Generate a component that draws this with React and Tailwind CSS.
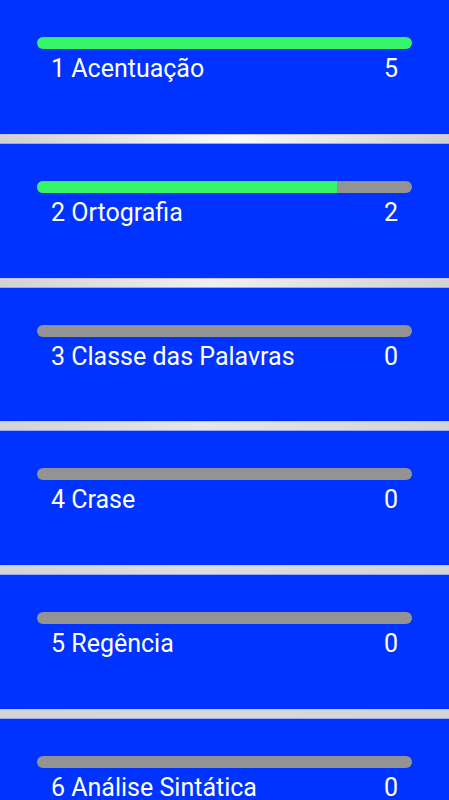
import React from 'react';

const topics = [
  { label: '1 Acentuação', score: 5, fill: 100 },
  { label: '2 Ortografia', score: 2, fill: 80 },
  { label: '3 Classe das Palavras', score: 0, fill: 0 },
  { label: '4 Crase', score: 0, fill: 0 },
  { label: '5 Regência', score: 0, fill: 0 },
  { label: '6 Análise Sintática', score: 0, fill: 0 },
];

// each divider gets a little dimmer further down the list
const dividers = [
  'bg-[linear-gradient(to_right,#d0d0d0,#fafafa_52%,#d0d0d0)]',
  'bg-[linear-gradient(to_right,#d2d2d2,#f0f0f0_47%,#d2d2d2)]',
  'bg-[linear-gradient(to_right,#d3d3d3,#e6e6e6_45%,#d3d3d3)]',
  'bg-[linear-gradient(to_right,#d4d4d4,#dedede_44%,#d4d4d4)]',
  'bg-[linear-gradient(to_right,#d4d4d4,#d9d9d9_45%,#d4d4d4)]',
];

function TopicCard({ topic }) {
  return (
    <div className="h-[133.8px] bg-[#0033ff] px-[37px] pt-[37px]">
      <div className="h-[12px] w-full overflow-hidden rounded-full bg-[#939393]">
        <div className="h-full bg-[#35f46a]" style={{ width: `${topic.fill}%` }} />
      </div>
      <div className="mt-[5px] flex items-center justify-between px-[14px] text-[25px] leading-[29px] text-white">
        <span>{topic.label}</span>
        <span>{topic.score}</span>
      </div>
    </div>
  );
}

export default function App() {
  return (
    <div
      className="h-[800px] overflow-hidden bg-[#0033ff] shadow-[inset_0_1px_2px_rgba(0,0,30,0.45)]"
      style={{ fontFamily: 'Roboto, "Noto Sans", sans-serif' }}
    >
      {topics.map((topic, i) => (
        <React.Fragment key={topic.label}>
          <TopicCard topic={topic} />
          {i < dividers.length && (
            <div className={`h-[10px] border-y border-t-[#c4c6ee] border-b-[#9aa6ff] ${dividers[i]}`} />
          )}
        </React.Fragment>
      ))}
    </div>
  );
}
